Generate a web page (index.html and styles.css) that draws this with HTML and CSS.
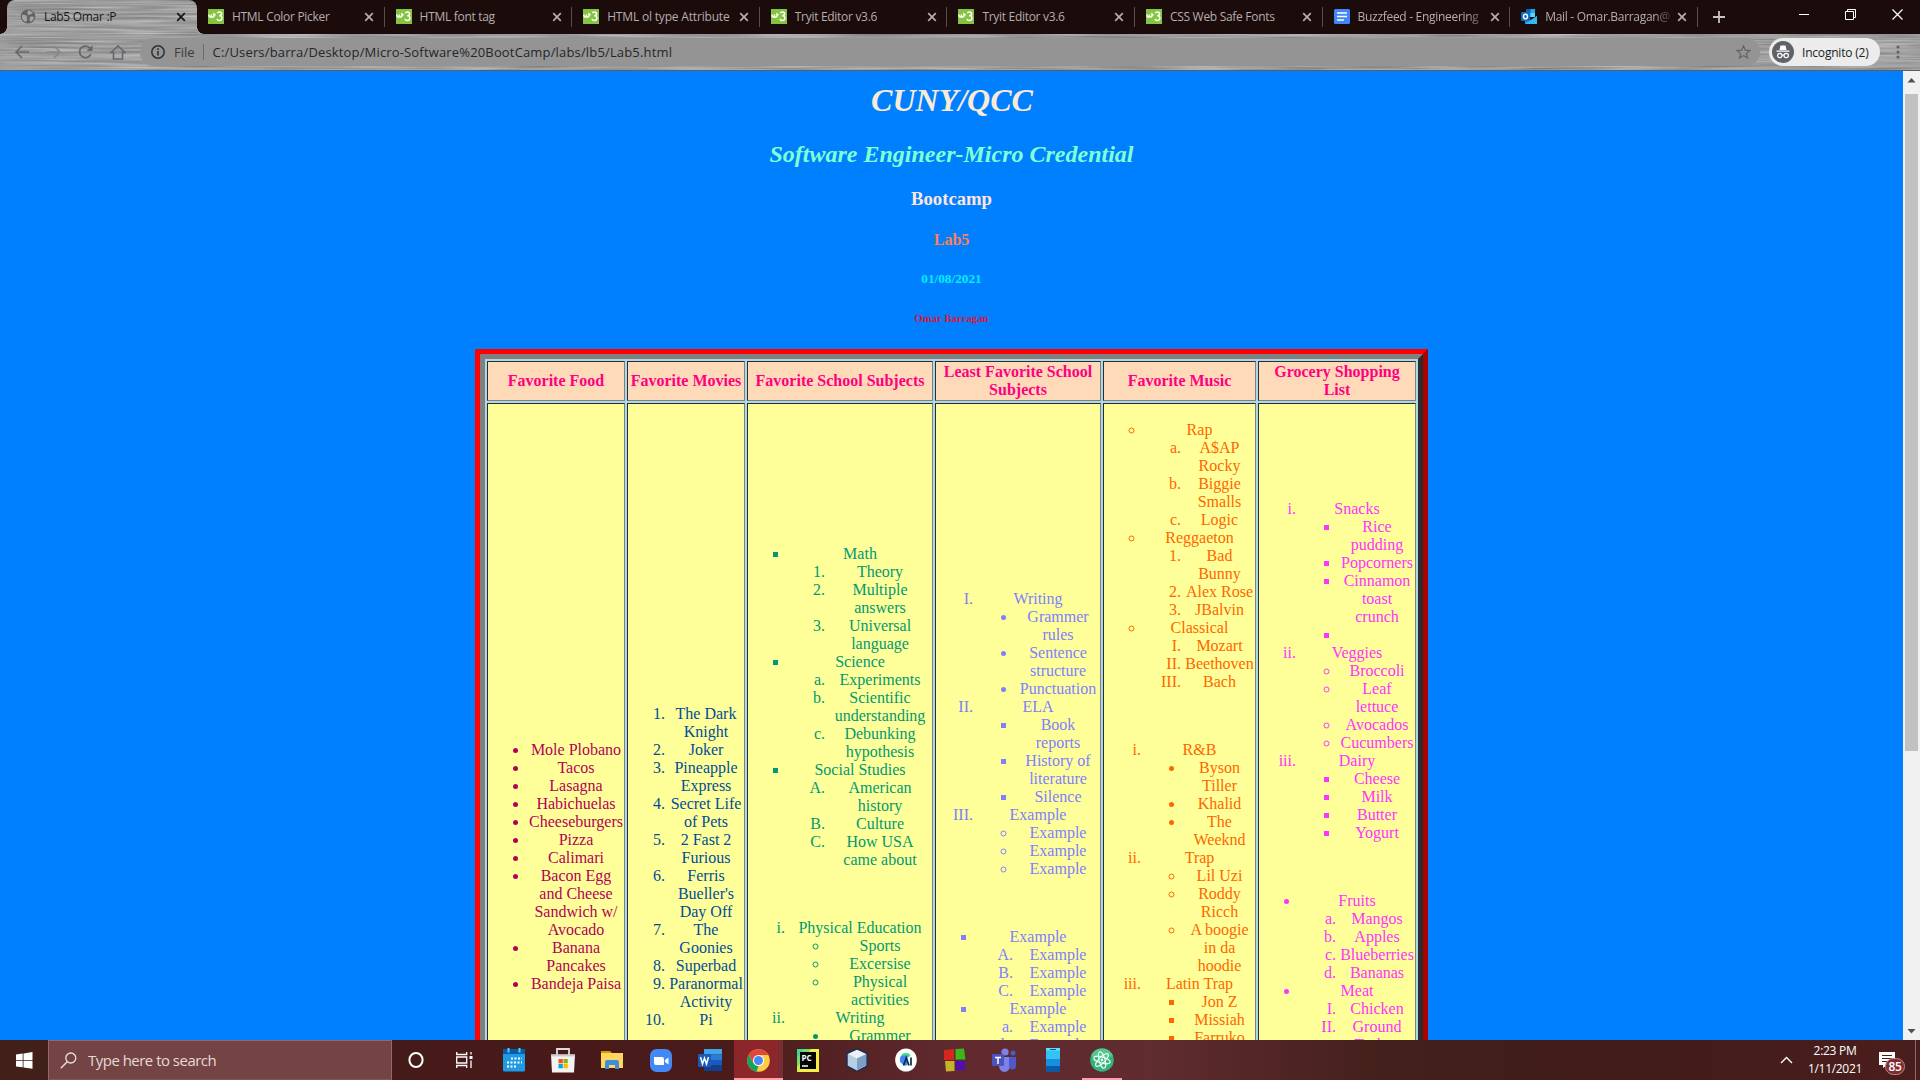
FILE: index.html
```html
<!DOCTYPE html>
<html lang="en">
<head>
<meta charset="utf-8">
<title>Lab5 Omar :P</title>
<link rel="stylesheet" href="styles.css">
</head>
<body>
<svg class="defs" width="0" height="0" aria-hidden="true">
  <defs>
    <filter id="brushed" x="0" y="0" width="100%" height="100%" color-interpolation-filters="sRGB">
      <feTurbulence type="fractalNoise" baseFrequency="0.012 0.45" numOctaves="2" seed="4"/>
      <feColorMatrix values="0.36 0 0 0 0.44  0.36 0 0 0 0.44  0.36 0 0 0 0.44  0 0 0 0 1"/>
    </filter>
    <symbol id="w3" viewBox="0 0 16 15"><rect width="16" height="15" fill="#85c440"/><path d="M1 5.500v1.200c0 1.800 2.400 1.800 2.400 0V5.500v1.200c0 1.800 2.600 1.800 2.600 0V5l1.500 1.200M9.400 4.200c.5-1.600 4.400-1.500 4.200.6 0 1.600-1.200 1.900-2.400 1.900 1.600 0 2.800.6 2.700 2.500-.1 2.800-4.400 3-4.900.6" fill="none" stroke="#fff" stroke-width="1.500"/></symbol>
    <symbol id="x" viewBox="0 0 10 10"><path d="M1.200 1.200l7.600 7.600M8.800 1.200L1.200 8.800" fill="none" stroke="currentColor" stroke-width="1.700"/></symbol>
  </defs>
</svg>

<header class="tabs">
  <div class="tab active">
    <svg class="metal"><rect width="100%" height="100%" filter="url(#brushed)"/></svg>
    <svg class="fav" viewBox="0 0 16 15"><ellipse cx="8" cy="7.500" rx="7.300" ry="7" fill="#5f6368"/><path d="M2 6c2-.5 3 .6 4.500.5 1 1.500-.5 2 .5 3.500s-1 2-1 3C3 12 1.500 9 2 6zM8 1.500c2 0 4 1 5 2.500-1 1-2 .5-3 1.500S8 6 7.500 4.500 8 3 8 1.500zM10 8c1.500-.8 3-.5 4 0-.3 2-1.500 4-3.500 5-.5-1.500-1.500-3.500-.5-5z" fill="#a5a5a5"/></svg>
    <span class="title">Lab5 Omar :P</span><svg class="close"><use href="#x"/></svg>
  </div>
  <div class="tab"><svg class="fav"><use href="#w3"/></svg><span class="title">HTML Color Picker</span><svg class="close"><use href="#x"/></svg></div>
  <div class="tab"><svg class="fav"><use href="#w3"/></svg><span class="title">HTML font tag</span><svg class="close"><use href="#x"/></svg></div>
  <div class="tab"><svg class="fav"><use href="#w3"/></svg><span class="title">HTML ol type Attribute</span><svg class="close"><use href="#x"/></svg></div>
  <div class="tab"><svg class="fav"><use href="#w3"/></svg><span class="title">Tryit Editor v3.6</span><svg class="close"><use href="#x"/></svg></div>
  <div class="tab"><svg class="fav"><use href="#w3"/></svg><span class="title">Tryit Editor v3.6</span><svg class="close"><use href="#x"/></svg></div>
  <div class="tab"><svg class="fav"><use href="#w3"/></svg><span class="title">CSS Web Safe Fonts</span><svg class="close"><use href="#x"/></svg></div>
  <div class="tab"><svg class="fav" viewBox="0 0 16 15"><rect width="16" height="15" rx="1.500" fill="#4285f4"/><path d="M3 4h10M3 7.500h10M3 11h7" stroke="#fff" stroke-width="1.700"/></svg><span class="title fade">Buzzfeed - Engineering</span><svg class="close"><use href="#x"/></svg></div>
  <div class="tab"><svg class="fav" viewBox="0 0 16 15"><path d="M5 0h9v8H5z" fill="#28a8ea"/><path d="M5 0h4.500v4H5z" fill="#0364b8"/><path d="M9.500 4H14v4H9.500z" fill="#50d9ff"/><path d="M4 7l6 4 6-4v8H4z" fill="#1490df"/><path d="M4 15l12-8v8z" fill="#35b8f1"/><rect y="3" width="9" height="9" rx="1" fill="#0f6cbd"/><ellipse cx="4.500" cy="7.500" rx="2" ry="2.400" fill="none" stroke="#fff" stroke-width="1.400"/></svg><span class="title fade">Mail - Omar.Barragan@</span><svg class="close"><use href="#x"/></svg></div>
  <svg class="plus" viewBox="0 0 12 12"><path d="M6 0v12M0 6h12" stroke="#c9c4c4" stroke-width="1.800"/></svg>
  <div class="winctl">
    <svg width="10" height="11"><path d="M0 5.500h10" stroke="#fff"/></svg>
    <svg width="11" height="11"><path d="M.5 2.500h8v8h-8zM2.500 2.500v-2h8v8h-2" fill="none" stroke="#fff"/></svg>
    <svg width="11" height="11"><path d="M.5.5l10 10M10.500.5l-10 10" stroke="#fff" stroke-width="1.200"/></svg>
  </div>
</header>

<div class="toolbar">
  <svg class="metal"><rect width="100%" height="100%" filter="url(#brushed)"/></svg>
  <nav class="nav">
    <svg width="16" height="14" viewBox="0 0 16 14"><path d="M15 7H2M8 1L2 7l6 6" fill="none" stroke="#64676c" stroke-width="1.600"/></svg>
    <svg width="16" height="14" viewBox="0 0 16 14"><path d="M1 7h13M8 1l6 6-6 6" fill="none" stroke="#84868a" stroke-width="1.600"/></svg>
    <svg width="16" height="14" viewBox="0 0 16 14"><path d="M12.800 9A5.800 5.800 0 1 1 12 3.300L13.500 5" fill="none" stroke="#64676c" stroke-width="1.800"/><path d="M14.500 0v6H8.500z" fill="#64676c"/></svg>
    <svg width="16" height="15" viewBox="0 0 16 15"><path d="M1 7.500L8 1l7 6.500h-2.500V14h-9V7.500z" fill="none" stroke="#64676c" stroke-width="1.600"/></svg>
  </nav>
  <div class="omnibox">
    <svg width="14" height="14" viewBox="0 0 14 14"><circle cx="7" cy="7" r="6.200" fill="none" stroke="#2f3134" stroke-width="1.500"/><path d="M7 6v4.500M7 3.200v1.700" stroke="#2f3134" stroke-width="1.600"/></svg>
    <span class="scheme">File</span>
    <span class="url">C:/Users/barra/Desktop/Micro-Software%20BootCamp/labs/lb5/Lab5.html</span>
    <svg class="star" width="15" height="14" viewBox="0 0 15 14"><path d="M7.500 1l1.800 4.200 4.600.4-3.500 3 1.100 4.400-4-2.400-4 2.400 1.100-4.400-3.500-3 4.600-.4z" fill="none" stroke="#5f6368" stroke-width="1.200"/></svg>
  </div>
  <div class="incognito">
    <svg width="22" height="22" viewBox="0 0 22 22"><circle cx="11" cy="11" r="11" fill="#5f6368"/><path d="M7.500 9l1-4.500h5l1 4.500zM4.500 9.500h13v1.300h-13z" fill="#fff"/><circle cx="7.800" cy="14.500" r="2.200" fill="none" stroke="#fff" stroke-width="1.200"/><circle cx="14.200" cy="14.500" r="2.200" fill="none" stroke="#fff" stroke-width="1.200"/><path d="M10 14h2" stroke="#fff"/></svg>
    <span>Incognito (2)</span>
  </div>
  <svg class="dots" width="4" height="14"><g fill="#5f6368"><circle cx="2" cy="2" r="1.600"/><circle cx="2" cy="7" r="1.600"/><circle cx="2" cy="12" r="1.600"/></g></svg>
</div>

<div class="view">
<main class="page">
  <h1>CUNY/QCC</h1>
  <h2>Software Engineer-Micro Credential</h2>
  <h3>Bootcamp</h3>
  <h4>Lab5</h4>
  <h5>01/08/2021</h5>
  <h6>Omar Barragan</h6>
  <div class="frame">
  <table class="favs">
    <colgroup><col class="c1"><col class="c2"><col class="c3"><col class="c4"><col class="c5"><col class="c6"></colgroup>
    <tr><th>Favorite Food</th><th>Favorite Movies</th><th>Favorite School Subjects</th><th>Least Favorite School Subjects</th><th>Favorite Music</th><th>Grocery Shopping List</th></tr>
    <tr class="lists">
      <td class="food">
        <ul class="disc"><li>Mole Plobano</li><li>Tacos</li><li>Lasagna</li><li>Habichuelas</li><li>Cheeseburgers</li><li>Pizza</li><li>Calimari</li><li>Bacon Egg and Cheese Sandwich w/ Avocado</li><li>Banana Pancakes</li><li>Bandeja Paisa</li></ul>
      </td>
      <td class="movies">
        <ol><li>The Dark Knight</li><li>Joker</li><li>Pineapple Express</li><li>Secret Life of Pets</li><li>2 Fast 2 Furious</li><li>Ferris Bueller's Day Off</li><li>The Goonies</li><li>Superbad</li><li>Paranormal Activity</li><li>Pi</li></ol>
      </td>
      <td class="subjects">
        <ul class="square">
          <li>Math<ol><li>Theory</li><li>Multiple answers</li><li>Universal language</li></ol></li>
          <li>Science<ol type="a"><li>Experiments</li><li>Scientific understanding</li><li>Debunking hypothesis</li></ol></li>
          <li>Social Studies<ol type="A"><li>American history</li><li>Culture</li><li>How USA came about</li></ol></li>
        </ul>
        <br>
        <ol type="i">
          <li>Physical Education<ul class="circle"><li>Sports</li><li>Excersise</li><li>Physical activities</li></ul></li>
          <li>Writing<ul class="disc"><li>Grammer</li></ul></li>
        </ol>
      </td>
      <td class="least">
        <ol type="I">
          <li>Writing<ul class="disc"><li>Grammer rules</li><li>Sentence structure</li><li>Punctuation</li></ul></li>
          <li>ELA<ul class="square"><li>Book reports</li><li>History of literature</li><li>Silence</li></ul></li>
          <li>Example<ul class="circle"><li>Example</li><li>Example</li><li>Example</li></ul></li>
        </ol>
        <br>
        <ul class="square">
          <li>Example<ol type="A"><li>Example</li><li>Example</li><li>Example</li></ol></li>
          <li>Example<ol type="a"><li>Example</li><li>Example</li></ol></li>
        </ul>
      </td>
      <td class="music">
        <ul class="circle">
          <li>Rap<ol type="a"><li>A$AP Rocky</li><li>Biggie Smalls</li><li>Logic</li></ol></li>
          <li>Reggaeton<ol><li>Bad Bunny</li><li>Alex Rose</li><li>JBalvin</li></ol></li>
          <li>Classical<ol type="I"><li>Mozart</li><li>Beethoven</li><li>Bach</li></ol></li>
        </ul>
        <br>
        <ol type="i">
          <li>R&amp;B<ul class="disc"><li>Byson Tiller</li><li>Khalid</li><li>The Weeknd</li></ul></li>
          <li>Trap<ul class="circle"><li>Lil Uzi</li><li>Roddy Ricch</li><li>A boogie in da hoodie</li></ul></li>
          <li>Latin Trap<ul class="square"><li>Jon Z</li><li>Missiah</li><li>Farruko</li></ul></li>
        </ol>
      </td>
      <td class="grocery">
        <ol type="i">
          <li>Snacks<ul class="square"><li>Rice pudding</li><li>Popcorners</li><li>Cinnamon toast crunch</li><li></li></ul></li>
          <li>Veggies<ul class="circle"><li>Broccoli</li><li>Leaf lettuce</li><li>Avocados</li><li>Cucumbers</li></ul></li>
          <li>Dairy<ul class="square"><li>Cheese</li><li>Milk</li><li>Butter</li><li>Yogurt</li></ul></li>
        </ol>
        <br>
        <ul class="disc">
          <li>Fruits<ol type="a"><li>Mangos</li><li>Apples</li><li>Blueberries</li><li>Bananas</li></ol></li>
          <li>Meat<ol type="I"><li>Chicken</li><li>Ground Turkey</li></ol></li>
        </ul>
      </td>
    </tr>
  </table>
  </div>
</main>
<aside class="scroll">
  <svg width="17" height="23"><path d="M4.500 11.500h8L8.500 7z" fill="#505050"/></svg>
  <div class="thumb"></div>
  <svg class="down" width="17" height="18"><path d="M4.500 7h8l-4 4.500z" fill="#505050"/></svg>
</aside>
</div>

<footer class="taskbar">
  <div class="start"><svg width="17" height="17" viewBox="0 0 17 17"><path d="M0 2.500l6.700-1V8H0zM7.500 1.400L16.500 0v8h-9zM0 8.800h6.700v6.500L0 14.400zM7.500 8.800h9v8l-9-1.400z" fill="#fff"/></svg></div>
  <div class="search"><svg width="17" height="17" viewBox="0 0 17 17"><circle cx="10.800" cy="6" r="5" fill="none" stroke="#eadede" stroke-width="1.300"/><path d="M7.200 9.800L.8 16.200" stroke="#eadede" stroke-width="1.400"/></svg><span>Type here to search</span></div>
  <div class="apps">
    <div><svg width="16" height="18"><ellipse cx="8" cy="9" rx="6.600" ry="7" fill="none" stroke="#fff" stroke-width="2"/></svg></div>
    <div><svg width="18" height="16"><path d="M.7 0v2.500h10V0M.7 16v-2.500h10V16M.7 5h10v6h-10zM15 0v2.500M15 8.500V16" fill="none" stroke="#fff" stroke-width="1.300"/><rect x="13.500" y="4" width="3" height="3" fill="#fff"/></svg></div>
    <div><svg width="22" height="24" viewBox="0 0 22 24"><rect y="1" width="22" height="22.500" rx="1.500" fill="#1f9be6"/><path d="M0 2.500Q0 1 1.500 1h19Q22 1 22 2.500V6H0z" fill="#0a5ea8"/><path d="M5.500 0v4.500M16.500 0v4.500" stroke="#4fd2ff" stroke-width="2"/><path d="M8 10.500h11M4 14.500h15M4 18.500h10" stroke="#fff" stroke-width="2" stroke-dasharray="2 1.500"/></svg></div>
    <div><svg width="24" height="25" viewBox="0 0 24 25"><path d="M6 7V1h12v6" fill="none" stroke="#ddd" stroke-width="1.800"/><path d="M0 6.500h24L23 24.500H1z" fill="#f3f3f3"/><path d="M0 6.500h24v2H0z" fill="#ccc"/><path d="M7.500 11h4.300v4.300H7.500z" fill="#f25022"/><path d="M12.500 11h4.300v4.300h-4.300z" fill="#7fba00"/><path d="M7.500 16h4.300v4.300H7.500z" fill="#00a4ef"/><path d="M12.500 16h4.300v4.300h-4.300z" fill="#ffb900"/></svg></div>
    <div><svg width="22" height="20" viewBox="0 0 22 20"><path d="M0 1h9l2 2H0z" fill="#d99b00"/><path d="M0 3h22v15H0z" fill="#ffd75e"/><path d="M4 19v-7q0-2 2-2h10q2 0 2 2v7h-4v-4H8v4z" fill="#3d8fdb"/></svg></div>
    <div><svg width="22" height="23" viewBox="0 0 22 23"><rect width="22" height="23" rx="6.500" fill="#4289f7"/><path d="M4 8h8q2 0 2 2v6H6q-2 0-2-2zM15 11l3.500-2.500v7L15 13z" fill="#fff"/></svg></div>
    <div><svg width="24" height="22" viewBox="0 0 24 22"><path d="M6 0h18v5.500H6z" fill="#41a5ee"/><path d="M6 5.500h18V11H6z" fill="#2b7cd3"/><path d="M6 11h18v5.500H6z" fill="#185abd"/><path d="M6 16.500h18V22H6z" fill="#103f91"/><rect y="5" width="13" height="13" rx="1" fill="#185abd"/><path d="M2.500 8l2 7L6.500 9l2 6 2-7" fill="none" stroke="#fff" stroke-width="1.500"/></svg></div>
    <div class="running"><svg width="23" height="23" viewBox="0 0 23 23"><circle cx="11.500" cy="11.500" r="11.300" fill="#ffcd40"/><path d="M1.700 5.900A11.300 11.300 0 0 1 21.300 6H11.500L6.600 14z" fill="#e0463a"/><path d="M1.700 5.900L6.600 14.200 11.500 17 9.500 22.700A11.300 11.300 0 0 1 1.700 5.900z" fill="#18a05c"/><path d="M21.300 6H11.500l5 8.500-5.500 8.300z" fill="#ffcd40"/><circle cx="11.500" cy="11.500" r="5.500" fill="#fff"/><circle cx="11.500" cy="11.500" r="4.500" fill="#4687f4"/></svg></div>
    <div><svg width="22" height="23" viewBox="0 0 22 23"><rect width="22" height="23" fill="#f4f04a"/><path d="M0 0h14L0 18z" fill="#42d98d"/><path d="M14 0h-7L0 9v14h2z" fill="#a5e25c" opacity=".5"/><rect x="3" y="3" width="16" height="17" fill="#050505"/><path d="M5 17h6" stroke="#fff" stroke-width="1.500"/><text x="4.500" y="11.500" class="pc">PC</text></svg></div>
    <div><svg width="22" height="24" viewBox="0 0 22 24"><path d="M11 .8l10 4.700v12.500L11 23.300 1 18V5.500z" fill="#b6cfe4" stroke="#1c2b52" stroke-width="1.400"/><path d="M11 2l8.800 4-8.800 4.500L2.200 6z" fill="#e9f2f8"/><path d="M11 10.500L20 6.200v11.300l-9 4.700z" fill="#7d9fc6"/></svg></div>
    <div><svg width="22" height="24" viewBox="0 0 22 24"><ellipse cx="11" cy="12" rx="10.800" ry="11.600" fill="#fff"/><path d="M6 9q0-4 5-4 4 0 4.500 3l-3 1.500z" fill="#3ddc84"/><path d="M5 9.500Q5.500 7.500 9 7.500h3.500V17q-2 1.200-4 0L5 14z" fill="#4285f4"/><path d="M8.500 17.500L11.300 10l2.700 7.500M16 9.500v8" fill="none" stroke="#073042" stroke-width="1.700"/></svg></div>
    <div><svg width="22" height="24" viewBox="0 0 22 24"><path d="M0 2l10-1v11H0z" fill="#d5271d"/><path d="M11.500 1L20 .5l1.500 11h-10z" fill="#3fb51d"/><path d="M1 13h9.500v10L2 23.500z" fill="#c5b427"/><path d="M11.500 13h10l-1 9.500-9-.5z" fill="#5110ad"/></svg></div>
    <div><svg width="24" height="24" viewBox="0 0 24 24"><circle cx="13" cy="4" r="3.600" fill="#7b83eb"/><circle cx="21" cy="5" r="2.500" fill="#5059c9"/><path d="M7 9h11v9a5.500 6 0 0 1-11 0z" fill="#7b83eb"/><path d="M17 9h7v7a3.500 4.500 0 0 1-7 2z" fill="#5059c9"/><rect y="6" width="12" height="12" rx="1" fill="#4b53bc"/><path d="M3 9.500h6M6 9.500V16" stroke="#fff" stroke-width="1.500"/></svg></div>
    <div><svg width="14" height="24" viewBox="0 0 14 24"><rect width="14" height="24" rx="1" fill="#0c59a4"/><path d="M0 1h14v10H0z" fill="#35c1f1"/><path d="M0 11h14v7H0z" fill="#1490df"/><path d="M0 0h14v2.500H0z" fill="#50e6ff"/><path d="M4 1.500h6" stroke="#104a8a"/></svg></div>
    <div class="open"><svg width="24" height="24" viewBox="0 0 24 24"><circle cx="12" cy="12" r="11.800" fill="#35b27c"/><path d="M1 8A11.800 11.800 0 0 1 23 8Q12 12 1 8z" fill="#65cf96" opacity=".7"/><g fill="none" stroke="#e6fff2" stroke-width="1.100"><ellipse cx="12" cy="12" rx="3" ry="8.500" transform="rotate(-15 12 12)"/><ellipse cx="12" cy="12" rx="3" ry="8.500" transform="rotate(45 12 12)"/><ellipse cx="12" cy="12" rx="3" ry="8.500" transform="rotate(105 12 12)"/></g><circle cx="12" cy="12" r="1.400" fill="#e6fff2"/></svg></div>
  </div>
  <div class="tray">
    <svg width="13" height="8"><path d="M1 7l5.500-5.500L12 7" fill="none" stroke="#fff" stroke-width="1.400"/></svg>
    <div class="clock"><span>2:23 PM</span><span>1/11/2021</span></div>
    <div class="note"><svg width="16" height="16"><path d="M0 0h16v13H8l-4 3v-3H0z" fill="#fff"/><path d="M3 3.500h10M3 6.500h10M3 9.500h7" stroke="#4a1c1a"/></svg><b class="badge">85</b></div>
    <div class="peek"></div>
  </div>
</footer>
</body>
</html>
```
FILE: styles.css
```css
* { box-sizing: border-box; }
html, body { height: 100%; }
body { margin: 0; display: flex; flex-direction: column; overflow: hidden; font-family: "Open Sans", "Noto Sans", sans-serif; font-size: 12px; background: #0080ff; }
svg { display: block; flex: none; }
.defs { position: absolute; }
.metal { position: absolute; inset: 0; width: 100%; height: 100%; z-index: -1; }

/* tab strip */
.tabs {
  height: 34px; flex: none; display: flex; align-items: center; color: #b5aeae; padding-left: 7px;
  background:
    radial-gradient(circle at 0 0, #1b0b0b 6.500px, #9c9c9c 7px) 0 100% / 7px 7px no-repeat,
    radial-gradient(circle at 100% 0, #1b0b0b 6.500px, #9c9c9c 7px) 197px 100% / 7px 7px no-repeat,
    #1b0b0b;
}
.tab { width: 187.6px; height: 34px; flex: none; display: flex; align-items: center; padding: 0 10.500px 1px 11px; position: relative; }
.tab:not(.active)::after { content: ""; width: 1px; height: 20px; background: #5a4c4c; position: absolute; right: 0; top: 7px; }
.tab.active { width: 190px; color: #16161a; padding: 0 11px 1px 13px; isolation: isolate; border-radius: 8px 8px 0 0; overflow: hidden; }
.fav { width: 16px; height: 15px; margin-right: 8px; }
.title { flex: 1; white-space: nowrap; overflow: hidden; letter-spacing: -.3px; }
.tab:nth-child(4) .title { letter-spacing: -.18px; }
.fade { -webkit-mask-image: linear-gradient(90deg, #000 85%, transparent 102%); mask-image: linear-gradient(90deg, #000 85%, transparent 102%); }
.close { width: 10px; height: 10px; margin-left: 4px; }
.plus { width: 12px; height: 12px; margin-left: 15px; }
.winctl { margin-left: auto; display: flex; gap: 36px; padding: 0 17px 6px 0; }

/* toolbar */
.toolbar { height: 37px; flex: none; display: flex; align-items: center; position: relative; isolation: isolate; border-bottom: 1px solid #5e5e5e; }
.nav { display: flex; gap: 16px; width: 140px; padding-left: 14px; align-items: center; }
.omnibox { width: 1620px; height: 28px; border-radius: 14px; background: #949494; display: flex; align-items: center; padding: 0 9px 0 11px; color: #25272a; font-size: 13px; }
.scheme { margin-left: 9px; padding-right: 8px; border-right: 1px solid #6b6b6b; color: #393b3e; line-height: 16px; letter-spacing: 0; }
.url { margin-left: 9px; letter-spacing: .16px; }
.star { margin-left: auto; }
.incognito { width: 111px; height: 28px; margin-left: 9px; border-radius: 14px; background: #ececec; display: flex; align-items: center; gap: 8px; padding-left: 3px; color: #202124; white-space: nowrap; letter-spacing: -.2px; }
.dots { margin-left: 16px; }

/* document */
.view { flex: 1; min-height: 0; display: flex; }
.page { flex: 1; background: #0080ff; overflow: hidden; font: 16px/18px "Liberation Serif", "Times New Roman", serif; text-align: center; padding: 11px 8px 0; }
.page h1, .page h2, .page h3, .page h4, .page h5, .page h6 { margin: 0; font-weight: bold; }
.page h1 { font-size: 32px; line-height: 36px; font-style: italic; color: #faebd7; padding-left: 1px; }
.page h2 { font-size: 24px; line-height: 28px; margin-top: 22px; font-style: italic; color: #7fffd4; }
.page h3 { font-size: 18.72px; line-height: 22px; margin-top: 20px; color: #ffe4e1; }
.page h4 { font-size: 16px; line-height: 18px; margin-top: 21px; color: #ff7f50; }
.page h5 { font-size: 13.28px; line-height: 15px; margin-top: 22px; color: #00eeff; }
.page h6 { font-size: 10.72px; line-height: 13px; margin-top: 26px; color: #dc143c; }
.frame { width: 953px; margin: 24px auto 0; border: 5px solid; border-color: #f00 #a00 #a00 #f00; }
.favs { width: 943px; height: 1100px; table-layout: fixed; border-collapse: separate; border-spacing: 2px; border: 5px solid; border-color: #808080 #2c2c2c #2c2c2c #808080; background: #add8e6; }
.c1 { width: 138px; } .c2 { width: 118px; } .c3 { width: 186px; } .c4 { width: 166px; } .c5 { width: 153px; } .c6 { width: 158px; }
th, td { border: 1px solid; border-color: #2c2c2c #808080 #808080 #2c2c2c; padding: 1px; }
th { height: 40px; background: #ffdab9; color: #ff0080; }
td { background: #ff9; vertical-align: top; }
ul, ol { margin: 16px 0; padding-left: 40px; }
li ul, li ol { margin: 0; }
.disc { list-style-type: disc; } .circle { list-style-type: circle; } .square { list-style-type: square; }
.food { padding-top: 321px; color: #b30059; }
.movies { padding-top: 285px; color: #004d99; }
.subjects { padding-top: 125px; color: #009973; }
.least { padding-top: 170px; color: #8080ff; }
.music { color: #ff6600; }
.grocery { padding-top: 80px; color: #ff33ff; }

.scroll { width: 17px; background: #f1f1f1; display: flex; flex-direction: column; }
.thumb { height: 657px; margin: 0 2px; background: #c1c1c1; }
.down { margin-top: auto; }

/* taskbar */
.taskbar { height: 40px; flex: none; display: flex; color: #fff; background: linear-gradient(90deg, #41201a 0, #471a19 28%, #4a1b1b 38%, #602a2e 50%, #602c2f 60%, #43201b 72%, #411c19 84%, #4a1e1d 100%); }
.start { width: 48px; display: flex; align-items: center; padding-left: 16px; }
.search { width: 344px; border: 1px solid #926969; border-bottom-color: #805555; background: #744444; display: flex; align-items: center; padding-left: 11px; color: #e6d9d9; font-size: 15px; }
.search span { margin-left: 11px; letter-spacing: -.52px; }
.apps { display: flex; margin-left: -1px; }
.apps > div { width: 49px; display: flex; align-items: center; justify-content: center; }
.running { background: linear-gradient(90deg, #8c262b 44px, #6a3033 44px, #6a3033 45px, #7a2c30 45px); box-shadow: inset 0 -2px #ff9fa8; }
.apps .open { background: linear-gradient(#ff9fa8, #ff9fa8) 50% 100% / 40px 2px no-repeat; }
.pc { font: bold 8px "Open Sans", sans-serif; fill: #fff; }
.tray { margin-left: auto; display: flex; align-items: center; }
.clock { width: 76px; margin-left: 4px; display: flex; flex-direction: column; text-align: center; line-height: 18px; letter-spacing: -.3px; }
.note { margin-left: 6px; position: relative; }
.badge { position: absolute; left: 6px; top: 6px; width: 20px; height: 17px; border-radius: 9px; background: #842a2f; border: 1px solid #b98b8b; font-size: 12px; font-weight: 600; line-height: 15px; text-align: center; letter-spacing: -.3px; }
.peek { width: 5px; height: 40px; margin-left: 20px; border-left: 1px solid #8a6a69; }
```
